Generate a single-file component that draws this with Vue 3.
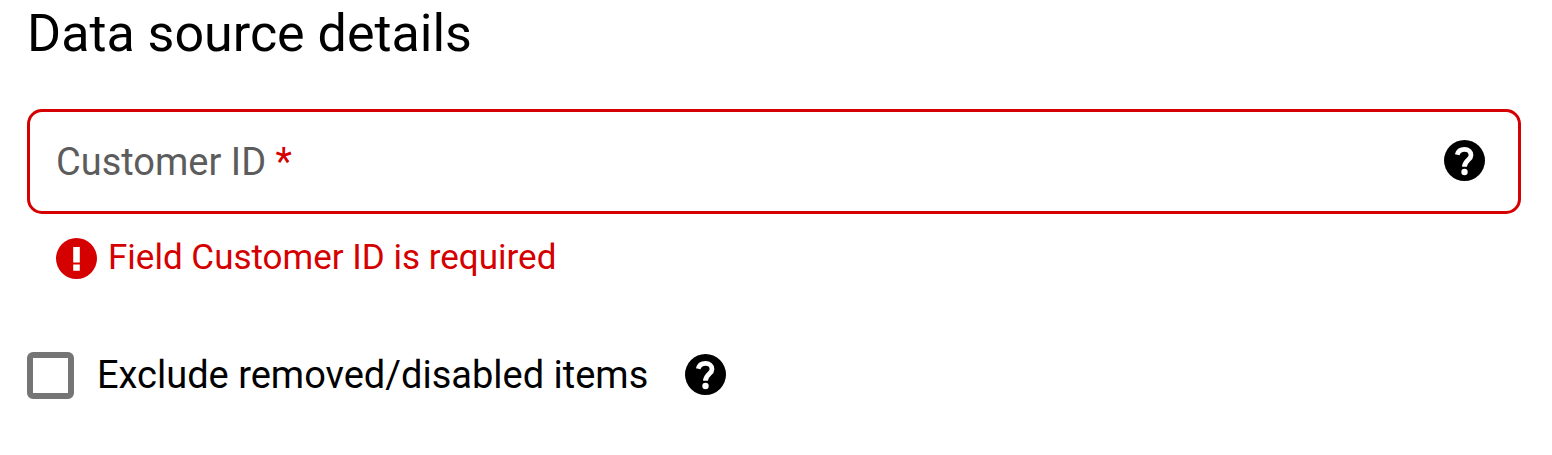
<template>
  <section class="source-details">
    <h1 class="section-title">Data source details</h1>

    <div class="field">
      <div class="field-box">
        <label for="customer-id" class="field-label">
          Customer ID <span class="required">*</span>
        </label>
        <input
          id="customer-id"
          v-model="customerId"
          class="field-input"
          type="text"
          aria-describedby="customer-id-error"
          aria-invalid="true"
          required
        />
        <button type="button" class="help-button" aria-label="Help for Customer ID">
          <svg class="icon" viewBox="0 0 41 41" aria-hidden="true">
            <circle cx="20.5" cy="20.5" r="20.5" />
            <path class="mark" :d="questionMark" />
            <circle class="dot" cx="20.5" cy="32" r="3.2" />
          </svg>
        </button>
      </div>

      <p id="customer-id-error" class="error">
        <svg class="icon" viewBox="0 0 41 41" aria-hidden="true">
          <circle cx="20.5" cy="20.5" r="20.5" />
          <path class="dot" d="M17.2 9h6.6v15.6h-6.6zM17.2 26.6h6.6v6.2h-6.6z" />
        </svg>
        <span>Field Customer ID is required</span>
      </p>
    </div>

    <div class="option">
      <input id="exclude-items" v-model="excludeItems" class="checkbox" type="checkbox" />
      <label for="exclude-items" class="option-label">Exclude removed/disabled items</label>
      <button type="button" class="help-button" aria-label="Help for excluded items">
        <svg class="icon" viewBox="0 0 41 41" aria-hidden="true">
          <circle cx="20.5" cy="20.5" r="20.5" />
          <path class="mark" :d="questionMark" />
          <circle class="dot" cx="20.5" cy="32" r="3.2" />
        </svg>
      </button>
    </div>
  </section>
</template>

<script setup>
import { ref } from 'vue'

const customerId = ref('')
const excludeItems = ref(false)

const questionMark = 'M13.2 14.8C14 11.4 16.8 9.4 20.5 9.4C24.3 9.4 27 11.8 27 15.2C27 20 20.5 20.4 20.5 26.8'
</script>

<style>
body {
  margin: 0;
  background-color: #fff;
}
</style>

<style scoped>
.source-details {
  padding: 4px 31px 56px 27px;
  font-family: Roboto, "Liberation Sans", sans-serif;
  color: #000;
}

.section-title {
  margin: 0 0 45px;
  font-size: 52px;
  font-weight: 400;
  line-height: 60px;
}

.field-box {
  display: flex;
  align-items: center;
  box-sizing: border-box;
  min-height: 105px;
  padding: 0 33px 0 26px;
  border: 3px solid #d50000;
  border-radius: 15px;
}

.field-label {
  font-size: 38px;
  line-height: 48px;
  color: #5c5c5c;
}

.required {
  color: #d50000;
}

.field-input {
  flex: 1;
  min-width: 0;
  height: 48px;
  padding: 0 8px;
  border: none;
  outline: none;
  background: transparent;
  font: inherit;
  font-size: 38px;
}

.help-button {
  flex: none;
  display: flex;
  padding: 0 0 2px;
  border: none;
  background: transparent;
  color: #000;
  cursor: pointer;
}

.icon {
  flex: none;
  width: 41px;
  height: 41px;
  fill: currentColor;
}

.mark {
  fill: none;
  stroke: #fff;
  stroke-width: 4.8;
}

.dot {
  fill: #fff;
}

.error {
  display: flex;
  align-items: center;
  gap: 11px;
  margin: 19px 0 0;
  padding: 0 29px;
  font-size: 35px;
  line-height: 50px;
  color: #d50000;
}

.option {
  display: flex;
  align-items: center;
  margin-top: 68px;
}

.checkbox {
  appearance: none;
  box-sizing: border-box;
  flex: none;
  width: 47px;
  height: 47px;
  margin: 0;
  border: 6px solid #757575;
  border-radius: 6px;
  background-color: #fff;
}

.checkbox:checked {
  background-color: #757575;
}

.option-label {
  margin: 0 37px 0 23px;
  font-size: 38px;
  line-height: 48px;
}
</style>
